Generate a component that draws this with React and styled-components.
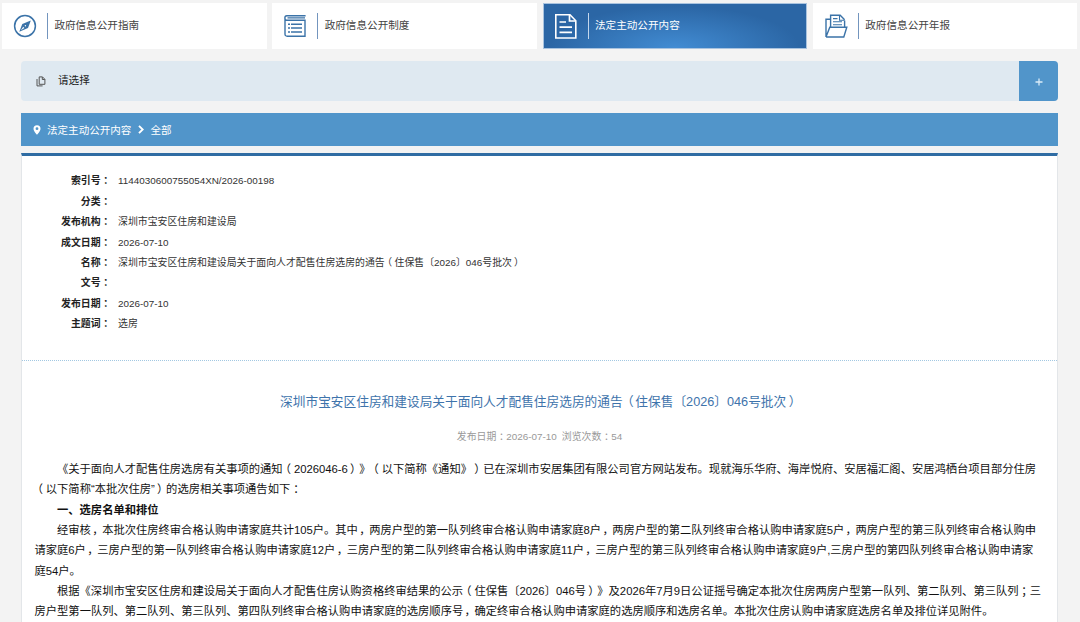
import React from "react";
import styled, { createGlobalStyle, css } from "styled-components";

const GlobalStyle = createGlobalStyle`
	* {
		box-sizing: border-box;
		margin: 0;
		padding: 0;
	}
	body {
		background: #f3f3f3;
		color: #333;
		font-family: "Liberation Sans", "Noto Sans CJK SC", sans-serif;
	}
`;

const tabs = [
	{ title: "政府信息公开指南", icon: "compass" },
	{ title: "政府信息公开制度", icon: "book" },
	{ title: "法定主动公开内容", icon: "file", active: true },
	{ title: "政府信息公开年报", icon: "folder" },
];

const details = [
	["索引号：", "1144030600755054XN/2026-00198"],
	["分类：", ""],
	["发布机构：", "深圳市宝安区住房和建设局"],
	["成文日期：", "2026-07-10"],
	[
		"名称：",
		"深圳市宝安区住房和建设局关于面向人才配售住房选房的通告（住保售〔2026〕046号批次）",
	],
	["文号：", ""],
	["发布日期：", "2026-07-10"],
	["主题词：", "选房"],
];

const lines = [
	{
		indent: true,
		text: "《关于面向人才配售住房选房有关事项的通知（2026046-6）》（以下简称《通知》）已在深圳市安居集团有限公司官方网站发布。现就海乐华府、海岸悦府、安居福汇阁、安居鸿栖台项目部分住房",
	},
	{ text: "（以下简称“本批次住房”）的选房相关事项通告如下：" },
	{ indent: true, bold: true, text: "一、选房名单和排位" },
	{
		indent: true,
		text: "经审核，本批次住房终审合格认购申请家庭共计105户。其中，两房户型的第一队列终审合格认购申请家庭8户，两房户型的第二队列终审合格认购申请家庭5户，两房户型的第三队列终审合格认购申",
	},
	{
		text: "请家庭6户，三房户型的第一队列终审合格认购申请家庭12户，三房户型的第二队列终审合格认购申请家庭11户，三房户型的第三队列终审合格认购申请家庭9户,三房户型的第四队列终审合格认购申请家",
	},
	{ text: "庭54户。" },
	{
		indent: true,
		text: "根据《深圳市宝安区住房和建设局关于面向人才配售住房认购资格终审结果的公示（住保售〔2026〕046号）》及2026年7月9日公证摇号确定本批次住房两房户型第一队列、第二队列、第三队列；三",
	},
	{
		text: "房户型第一队列、第二队列、第三队列、第四队列终审合格认购申请家庭的选房顺序号，确定终审合格认购申请家庭的选房顺序和选房名单。本批次住房认购申请家庭选房名单及排位详见附件。",
	},
];

// full-width marks are drawn in the middle of their cell
const shifts = {
	"（": "-0.25em",
	"）": "0.2em",
	"，": "0.12em",
	"：": "0.27em",
	"；": "0.25em",
};

const Text = ({ children }) =>
	children.split(/([（），：；])/).map((part, i) =>
		shifts[part] ? (
			<Mark key={i} $shift={shifts[part]}>
				{part}
			</Mark>
		) : (
			part
		)
	);

const TabIcon = ({ name }) => (
	<svg width="24" height="26" viewBox="0 0 24 26" fill="none" stroke="currentColor">
		{name === "compass" && (
			<>
				<circle cx="12" cy="13" r="10.4" strokeWidth="1.5" />
				<path d="M17.8 7.6 15 14.9 6.3 18.7 9.3 11.1z" fill="currentColor" stroke="none" />
				<path d="m7.9 17.3 2.3-3.6 1.2 1.2z" fill="#fff" stroke="none" />
				<circle cx="12.4" cy="12.8" r="0.7" fill="#fff" stroke="none" />
			</>
		)}
		{name === "book" && (
			<>
				<path
					d="M22.6 2.7H3.8C1.2 2.7 1.2 7.2 3.8 7.2H22V23.2H4.2C2.7 23.2 2 22.4 2 21V5M4.5 4.9H22"
					strokeWidth="1.4"
				/>
				<path d="M5 11.2h2M5 15h2M5 19h2M8 11.2h11M8 15h11M8 19h11" strokeWidth="1.4" />
			</>
		)}
		{name === "file" && (
			<>
				<path d="M1.8 1.8H16l5.8 6V25H1.8z" strokeWidth="1.6" />
				<path d="M15.5 2v6h6M5.5 9H12M5.5 14.2H18M5.5 19.4H18" strokeWidth="1.7" />
			</>
		)}
		{name === "folder" && (
			<>
				<path
					d="M2 24V6.2h4.4M20.6 14V7.6M2 24h17.8l3-9.7H5.8L2 24M6.6 14V2.3h9.6l4.4 4.5"
					strokeWidth="1.4"
				/>
				<path d="M15.5 2.5v4.8h5M9 5.6h4.5M9 8.7h9M9 11.7h9" strokeWidth="1.1" />
			</>
		)}
	</svg>
);

const App = () => (
	<Page>
		<GlobalStyle />
		<Tabs>
			{tabs.map((tab) => (
				<Tab key={tab.title} $active={tab.active}>
					<TabIcon name={tab.icon} />
					<TabTitle $active={tab.active}>{tab.title}</TabTitle>
				</Tab>
			))}
		</Tabs>
		<Main>
			<Select>
				<svg width="10" height="11" viewBox="0 0 10 11" fill="none" stroke="#555">
					<path d="M3.2.9h3.3l2.4 2.4v5H3.2zM6.3 1v2.5h2.5M1 3v6.9h5.6" />
				</svg>
				<SelectLabel>请选择</SelectLabel>
				<Expand>
					<svg width="8" height="8" viewBox="0 0 8 8" stroke="#d9ebf8">
						<path d="M4 .5v7M.5 4h7" strokeWidth="1.3" />
					</svg>
				</Expand>
			</Select>
			<Breadcrumb>
				<svg width="8" height="10" viewBox="0 0 8 10">
					<path
						d="M4 .2A3.5 3.5 0 0 0 .5 3.7C.5 6.1 4 9.7 4 9.7s3.5-3.6 3.5-6A3.5 3.5 0 0 0 4 .2zm0 4.9a1.4 1.4 0 1 1 0-2.8 1.4 1.4 0 0 1 0 2.8z"
						fill="#fff"
					/>
				</svg>
				<span>法定主动公开内容</span>
				<svg width="6" height="9" viewBox="0 0 6 9" fill="none" stroke="#fff">
					<path d="m1 .8 3.7 3.7L1 8.2" strokeWidth="1.9" />
				</svg>
				<span>全部</span>
			</Breadcrumb>
			<Panel>
				<Details>
					{details.map(([label, value]) => (
						<React.Fragment key={label}>
							<dt>
								<Text>{label}</Text>
							</dt>
							<dd>
								<Text>{value}</Text>
							</dd>
						</React.Fragment>
					))}
				</Details>
				<Article>
					<h1>
						<Text>
							深圳市宝安区住房和建设局关于面向人才配售住房选房的通告（住保售〔2026〕046号批次）
						</Text>
					</h1>
					<Info>
						<span>
							<Text>发布日期：2026-07-10</Text>
						</span>
						<span>
							<Text>浏览次数：54</Text>
						</span>
					</Info>
					{lines.map((line) => (
						<Line key={line.text} $indent={line.indent} $bold={line.bold}>
							<Text>{line.text}</Text>
						</Line>
					))}
				</Article>
			</Panel>
		</Main>
	</Page>
);

const Page = styled.div`
	height: 622px;
	overflow: hidden;
`;

const Mark = styled.span`
	display: inline-block;
	width: 1em;
	line-height: 1;
	text-indent: ${(p) => p.$shift};
`;

const Tabs = styled.nav`
	display: grid;
	grid-template-columns: repeat(4, 264.5px);
	gap: 5.8px;
	padding: 3px 0 0 2px;
`;

const Tab = styled.div`
	display: flex;
	align-items: center;
	height: 46px;
	padding-left: 11px;
	background: #fff;
	color: #3b73a8;
	${(p) =>
		p.$active &&
		css`
			color: #fff;
			padding-left: 10px;
			border: 1px solid #a9c3df;
			background: radial-gradient(
				ellipse 125px 42px at 50% 100%,
				#428cd3,
				#2b66a5
			);
		`}
`;

const TabTitle = styled.span`
	height: 26px;
	margin-left: 10px;
	padding-left: 6.4px;
	border-left: 1px solid ${(p) => (p.$active ? "#c3d7ec" : "#7395be")};
	color: ${(p) => (p.$active ? "#fff" : "#444")};
	font-size: 10.6px;
	line-height: 24px;
`;

const Main = styled.main`
	width: 1037px;
	margin: 12px 0 0 21px;
`;

const Select = styled.div`
	display: flex;
	align-items: center;
	height: 40px;
	padding-left: 15px;
	overflow: hidden;
	border-radius: 4px;
	background: #dfe9f1;
`;

const SelectLabel = styled.span`
	flex: 1;
	margin: -3px 0 0 12px;
	color: #222;
	font-size: 10.6px;
`;

const Expand = styled.button`
	display: flex;
	align-items: center;
	justify-content: center;
	width: 39px;
	height: 40px;
	padding-top: 2px;
	border: 0;
	background: #5195ca;
`;

const Breadcrumb = styled.div`
	display: flex;
	align-items: center;
	gap: 6.5px;
	height: 33px;
	margin: 12px 0 7px;
	padding-left: 11.5px;
	background: #5195ca;
	color: #fff;
	font-size: 10.55px;
`;

const Panel = styled.section`
	height: 480px;
	border: 1px solid #e3e6e9;
	border-top: 3px solid #2f6ca3;
	border-bottom: 0;
	background: #fff;
`;

const Details = styled.dl`
	display: grid;
	grid-template-columns: 88.5px 1fr;
	grid-auto-rows: 20.45px;
	column-gap: 7.5px;
	height: 204.5px;
	padding-top: 15.2px;
	border-bottom: 1px dotted #a3c8e2;
	font-size: 9.89px;
	line-height: 20.45px;
	white-space: nowrap;
	dt {
		color: #222;
		font-weight: bold;
		text-align: right;
	}
`;

const Article = styled.article`
	padding: 31px 0 0 12.5px;
	h1 {
		margin-right: 12.5px;
		color: #3e73ab;
		font-size: 12.69px;
		font-weight: normal;
		line-height: 20px;
		text-align: center;
	}
`;

const Info = styled.p`
	display: flex;
	justify-content: center;
	gap: 5px;
	margin: 15px 12.5px 12.5px 0;
	color: #999;
	font-size: 9.88px;
	line-height: 20px;
`;

const Line = styled.p`
	padding-left: ${(p) => (p.$indent ? "22.5px" : 0)};
	color: #111;
	font-size: 11.29px;
	font-weight: ${(p) => (p.$bold ? "bold" : "normal")};
	line-height: 20.33px;
	white-space: nowrap;
`;

export default App;
